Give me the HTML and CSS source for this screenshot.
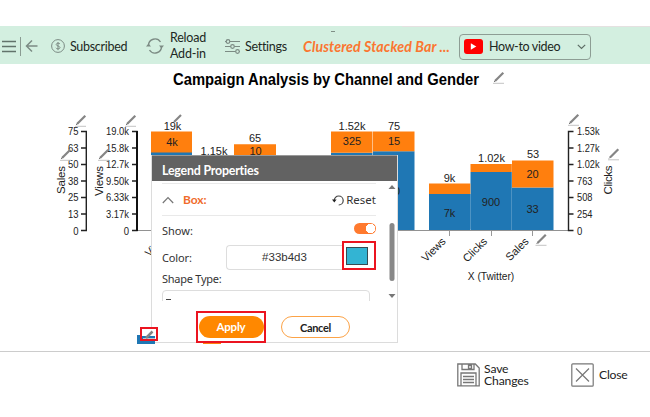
FILE: index.html
```html
<!DOCTYPE html>
<html lang="en">
<head>
<meta charset="utf-8">
<title>Campaign Analysis</title>
<link rel="stylesheet" href="styles.css">
</head>
<body>
<header class="toolbar">
  <svg class="nav" width="40" height="38"><path d="M2 15.5h14M2 20.5h14M2 25.5h14" stroke="#62736b" stroke-width="1.6"/><path d="M20.5 11v19" stroke="#8a9b92"/><path d="M37.500 20H27M32 14.500L26.500 20l5.500 5.500" fill="none" stroke="#7c8b84" stroke-width="1.5"/></svg>
  <div class="item subscribed"><svg width="14" height="14" viewBox="0 0 14 14" fill="none" stroke="#7c8b84"><circle cx="7" cy="7" r="6.4"/><path d="M9 5C8.500 3.800 5.200 3.800 5.200 5.500S9 6.800 9 8.600 5.300 10.200 4.900 8.800M7 3v8.200"/></svg><span>Subscribed</span></div>
  <div class="item reload"><svg width="18" height="16" viewBox="0 0 18 16" fill="none" stroke="#7c8b84" stroke-width="1.4"><path d="M2.500 7.500A6.500 6.500 0 0 1 14.500 4M15.500 8.500A6.500 6.500 0 0 1 3.500 12"/><path d="M0 8.500h5L2.500 5.500zM13 7.500h5l-2.500 3z" fill="#7c8b84" stroke="none"/></svg><span>Reload<br>Add-in</span></div>
  <div class="item settings"><svg width="17" height="15" viewBox="0 0 17 15" fill="#d3efe0" stroke="#7c8b84" stroke-width="1.2"><path d="M1 2.500h15M1 7.500h15M1 12.500h15"/><circle cx="4" cy="2.500" r="1.800"/><circle cx="8.500" cy="7.500" r="1.800"/><circle cx="13.500" cy="12.500" r="1.800"/></svg><span>Settings</span></div>
  <div class="chart-name">Clustered Stacked Bar ...</div>
  <div class="video"><svg width="19" height="15" viewBox="0 0 19 15"><rect width="19" height="15" rx="3" fill="#f00"/><path d="M6.800 4.300v6.400l5.500-3.200z" fill="#fff"/></svg><span>How-to video</span><svg class="chevron" width="9" height="6"><path d="M.8.8l3.700 3.700L8.200.8" fill="none" stroke="#5d6d65" stroke-width="1.200"/></svg></div>
  <i class="handle"></i>
</header>
<main class="stage">
<svg class="chart" width="650" height="287" viewBox="0 64 650 287">
  <defs>
    <g id="pencil"><path d="M2 9l8.300-8.300" stroke="#858585" stroke-width="2.200"/><path d="M1 10l1.500-1.500" stroke="#777"/><path d="M0 11.300h11" stroke="#c4c4c4"/></g>
  </defs>
  <text class="title" x="173" y="85" textLength="306" lengthAdjust="spacingAndGlyphs">Campaign Analysis by Channel and Gender</text>
  <use href="#pencil" x="493" y="72"/>

  <path d="M137 230.500H568" stroke="#929292"/>
  <g fill="#1f77b4">
    <path d="M151 152h41v78h-41zM234 160h42v70h-42zM331 152.700h41.500v77.300H331zM373 151.300h41.500v78.700H373zM429 194h41.300v36H429zM470.500 172h41.300v58h-41.300zM512 187.500h41.500v42.500H512z"/>
  </g>
  <g fill="#ff7f0e">
    <path d="M151 131.500h41v21h-41zM234 144.300h42v15.700h-42zM331 131.500h41.500v21.200H331zM373 131.500h41.500v19.800H373zM429 183.500h41.300V194H429zM470.500 164h41.300v8h-41.300zM512 160.500h41.500v27H512z"/>
  </g>
  <g class="value">
    <text x="172.500" y="130">19k</text><text x="172" y="145.500">4k</text><text x="214" y="154.500">1.15k</text><text x="255" y="142">65</text><text x="255.500" y="155">10</text>
    <text x="352" y="130">1.52k</text><text x="352" y="145">325</text><text x="394" y="130">75</text><text x="394" y="145">15</text><text x="394" y="195">60</text>
    <text x="449.500" y="181.500">9k</text><text x="449.500" y="216.500">7k</text><text x="491.500" y="162">1.02k</text><text x="491" y="205.500">900</text><text x="533" y="158">53</text><text x="532.500" y="177.500">20</text><text x="532.500" y="213">33</text>
  </g>
  <g fill="none" stroke="#222" stroke-width="1.400">
    <path d="M81 131.500h5.300v99H81M81 148h5M81 164.500h5M81 181h5M81 197.500h5M81 214h5"/>
    <path d="M132 131.500h5v99h-5M132 148h5M132 164.500h5M132 181h5M132 197.500h5M132 214h5"/>
    <path d="M573.500 131.500h-5v99h5M573.500 148h-5M573.500 164.500h-5M573.500 181h-5M573.500 197.500h-5M573.500 214h-5"/>
  </g>
  <path d="M137 131v100" stroke="#111" stroke-width="2"/>
  <g class="tick end">
    <text x="78.500" y="135" textLength="10.500" lengthAdjust="spacingAndGlyphs">75</text><text x="78.500" y="151.500" textLength="10.500" lengthAdjust="spacingAndGlyphs">63</text><text x="78.500" y="168" textLength="10.500" lengthAdjust="spacingAndGlyphs">50</text><text x="78.500" y="184.700" textLength="10.500" lengthAdjust="spacingAndGlyphs">38</text><text x="78.500" y="201" textLength="10.500" lengthAdjust="spacingAndGlyphs">25</text><text x="78.500" y="217.500" textLength="10.500" lengthAdjust="spacingAndGlyphs">13</text><text x="78.500" y="234.500" textLength="5.300" lengthAdjust="spacingAndGlyphs">0</text>
    <text x="129" y="135" textLength="23" lengthAdjust="spacingAndGlyphs">19.0k</text><text x="129" y="151.500" textLength="23" lengthAdjust="spacingAndGlyphs">15.8k</text><text x="129" y="168" textLength="23" lengthAdjust="spacingAndGlyphs">12.7k</text><text x="129" y="184.700" textLength="23" lengthAdjust="spacingAndGlyphs">9.50k</text><text x="129" y="201" textLength="23" lengthAdjust="spacingAndGlyphs">6.33k</text><text x="129" y="217.500" textLength="23" lengthAdjust="spacingAndGlyphs">3.17k</text><text x="129" y="234.500" textLength="5.300" lengthAdjust="spacingAndGlyphs">0</text>
  </g>
  <g class="tick">
    <text x="577" y="135" textLength="22.500" lengthAdjust="spacingAndGlyphs">1.53k</text><text x="577" y="151.500" textLength="22.500" lengthAdjust="spacingAndGlyphs">1.27k</text><text x="577" y="168" textLength="22.500" lengthAdjust="spacingAndGlyphs">1.02k</text><text x="577" y="184.700" textLength="15.500" lengthAdjust="spacingAndGlyphs">763</text><text x="577" y="201" textLength="15.500" lengthAdjust="spacingAndGlyphs">508</text><text x="577" y="217.500" textLength="15.500" lengthAdjust="spacingAndGlyphs">254</text><text x="577" y="234.500" textLength="5.300" lengthAdjust="spacingAndGlyphs">0</text>
  </g>
  <g class="axis-name">
    <text transform="translate(65 180) rotate(-90)" textLength="28">Sales</text>
    <text transform="translate(103 181) rotate(-90)" textLength="30">Views</text>
    <text transform="translate(611.500 180) rotate(-90)" textLength="29">Clicks</text>
  </g>
  <path d="M449.500 231v5M491.500 231v5M532.500 231v5" stroke="#999"/>
  <g class="category">
    <text transform="translate(446.500 242) rotate(-45)">Views</text><text transform="translate(488 242) rotate(-45)">Clicks</text><text transform="translate(529.500 242) rotate(-45)">Sales</text>
    <text transform="translate(170 237) rotate(-45)">Views</text>
  </g>
  <text class="group" x="491" y="280" textLength="46.500" lengthAdjust="spacingAndGlyphs">X (Twitter)</text>
  <g><use href="#pencil" x="75" y="115"/><use href="#pencil" x="125" y="115"/><use href="#pencil" x="60" y="149"/><use href="#pencil" x="98" y="149"/><use href="#pencil" x="568" y="114"/><use href="#pencil" x="608" y="148.500"/><use href="#pencil" x="535.500" y="234"/></g>
  <path d="M174 122l7-7" stroke="#858585" stroke-width="2.200"/>
</svg>
<section class="dialog">
  <h2><span>Legend Properties</span></h2>
  <div class="scroll">
    <div class="fields">
      <div class="section"><svg width="12" height="8"><path d="M.8 7L6 1.500 11.200 7" fill="none" stroke="#777" stroke-width="1.200"/></svg><b>Box:</b><svg class="undo" width="12" height="12"><path d="M2.200 6.500a4.500 4.500 0 1 1 4.500 4.500" fill="none" stroke="#444" stroke-width="1.200"/><path d="M0 5.500h4.600L2.300 8.500z" fill="#222"/></svg><span>Reset</span></div>
      <div class="row show"><span>Show:</span><i class="switch"></i></div>
      <div class="row color"><span>Color:</span><div class="input">#33b4d3</div><div class="swatch"><i></i></div></div>
      <div class="label">Shape Type:</div>
      <div class="select"><i></i></div>
    </div>
    <svg class="scrollbar" width="10" height="119"><path d="M1.500 8L5 4l3.500 4zM1.500 113L5 117l3.500-4z" fill="#777"/><rect x="2.500" y="42" width="5" height="58" rx="2.500" fill="#888"/></svg>
  </div>
  <footer><div class="mark"><button class="apply">Apply</button></div><button class="cancel">Cancel</button></footer>
</section>
<i class="legend-chip"></i>
<i class="legend-chip second"></i>
<div class="legend-mark"><svg width="14" height="10"><path d="M1 9.500h12" stroke="#b7c7d0"/><path d="M4 9L10.500 2.500" stroke="#858585" stroke-width="2.500"/></svg></div>
</main>
<footer class="actions">
  <svg width="23" height="24" viewBox="0 0 23 24" fill="none" stroke="#777" stroke-width="1.300"><path d="M.8 1h17.500l3.900 4v17.800H.8zM5 1v5.500h12V1M11.500 2.500h3v3h-3zM4 23V10h15v13M6 13.500h11M6 16.500h11M6 19.500h11"/></svg>
  <div class="save"><div>Save</div><div>Changes</div></div>
  <svg class="close-icon" width="23" height="24" viewBox="0 0 23 24" fill="none" stroke="#777" stroke-width="1.200"><rect x=".8" y=".8" width="21.400" height="22.400" rx="1"/><path d="M5 5.500l13 13M18 5.500l-13 13"/></svg>
  <span class="close">Close</span>
</footer>
</body>
</html>
```
FILE: styles.css
```css
* { box-sizing: border-box; }
body { margin: 0; width: 650px; height: 417px; padding-top: 26px; overflow: hidden; background: #fff; color: #222; font-family: Lato, "Open Sans", sans-serif; }
.toolbar { position: relative; display: flex; align-items: center; height: 38px; background: #d3efe0; font-size: 12.5px; color: #1d2823; }
.toolbar::before { content: ""; position: absolute; right: 0; top: 0; width: 248px; height: 1px; background: #e5e1e1; }
.toolbar span { white-space: nowrap; }
.nav { flex: none; }
.item { display: flex; align-items: center; flex: none; }
.item svg { flex: none; }
.subscribed { width: 95px; padding-left: 11px; gap: 5px; letter-spacing: -.3px; padding-top: 2px; }
.reload { width: 89px; padding-left: 11px; gap: 6px; line-height: 16px; letter-spacing: -.2px; padding-top: 1px; }
.settings { width: 79px; gap: 4px; padding-top: 2px; letter-spacing: -.3px; }
.chart-name { width: 156px; padding-top: 2px; font-size: 14.2px; letter-spacing: .1px; font-style: italic; font-weight: 700; color: #fb7630; white-space: nowrap; }
.video { display: flex; align-items: center; width: 132px; height: 26px; border: 1px solid #8d9d94; border-radius: 4px; padding: 0 4px; gap: 6px; margin-top: 3px; letter-spacing: -.35px; }
.chevron { margin-left: auto; }
.handle { position: absolute; left: 331px; top: 5px; width: 4px; height: 1px; background: #7f8f86; }
.stage { position: relative; height: 287px; }
.chart { display: block; font-family: "Liberation Sans", sans-serif; fill: #222; }
.title { font-size: 16px; font-weight: 700; fill: #000; }
.value { font-size: 11px; text-anchor: middle; }
.tick { font-size: 11px; }
.end, .category { text-anchor: end; }
.axis-name { font-size: 11.5px; text-anchor: middle; }
.category { font-size: 11px; }
.group { font-size: 11px; text-anchor: middle; }
.dialog { position: absolute; left: 151px; top: 91px; width: 247px; height: 188px; background: #fff; border: 1px solid #dcdcdc; border-top: 0; }
h2 { display: flex; align-items: center; margin: 0; height: 26px; padding: 3px 0 0 10px; background: #626262; border-top: 1px solid #999; color: #fff; font-size: 12.4px; font-weight: 700; letter-spacing: -.2px; }
.scroll { display: flex; height: 120px; overflow: hidden; }
.fields { width: 235px; padding: 2px 0 0 10px; font: 12.5px "Noto Sans", sans-serif; color: #333; }
.section { display: flex; align-items: center; width: 214px; height: 33px; border: solid #e9e9e9; border-width: 1px 0; }
.section b { margin-left: 9px; font: 700 12px Lato, sans-serif; letter-spacing: -.1px; color: #f06c2c; }
.section span { font-size: 11.5px; margin-left: 2px; }
.undo { margin-left: auto; }
.row { display: flex; align-items: center; }
.show { width: 214px; height: 27px; justify-content: space-between; font-size: 11px; }
.show span { padding-top: 1px; }
.switch { width: 22px; height: 11px; margin-bottom: 3px; border-radius: 6px; background: radial-gradient(circle at 16.5px 5.500px, #fff 0 4.500px, #ff7a2f 5px); }
.color { height: 28px; margin-top: -1px; font-size: 11px; }
.color > span { width: 64px; letter-spacing: -.15px; padding-top: 2px; }
.input { display: flex; align-items: center; justify-content: center; width: 116px; height: 25px; margin-top: 2px; border: 1px solid #ddd; border-right: 0; border-radius: 4px 0 0 4px; font: 11.5px "Liberation Sans", sans-serif; }
.swatch { display: flex; align-items: center; width: 34px; height: 29px; margin-top: -1px; border: 2px solid #eb1420; padding-left: 2px; background: #fff; }
.swatch i { width: 22px; height: 18px; background: #33b4d3; border: 1px solid #354b52; }
.label { height: 19px; margin-top: 1px; font-size: 11px; line-height: 15px; letter-spacing: -.25px; }
.select { width: 208px; height: 24px; border: 1px solid #ddd; border-radius: 4px; padding: 8px 0 0 3px; }
.select i { display: block; width: 5px; height: 1px; background: #444; }
.dialog footer { display: flex; align-items: center; padding: 10px 0 0 44px; }
.mark { display: flex; align-items: center; justify-content: center; width: 70px; height: 32px; border: 2px solid #eb1420; }
button { height: 22px; padding: 0; border-radius: 11px; font: 700 11.500px Lato, sans-serif; }
.apply { width: 65px; border: 0; background: #ff8800; color: #fff; padding-bottom: 2px; letter-spacing: -.2px; }
.cancel { width: 69px; margin-left: 15px; border: 1px solid #fca347; background: #fff; color: #222; font-size: 11px; letter-spacing: -.35px; }
.legend-chip { position: absolute; left: 137px; top: 271px; width: 18px; height: 9px; background: #1f77b4; }
.legend-chip.second { left: 203px; top: 279px; height: 1px; background: #ff7f0e; }
.legend-mark { position: absolute; left: 140px; top: 263px; width: 18px; height: 14px; border: 2px solid #eb1420; background: linear-gradient(#fff 0 7px, transparent 7px); }
.legend-mark svg { display: block; }
.actions { display: flex; align-items: center; height: 66px; padding: 0 0 19px 457px; border-top: 1px solid #ccc; font-size: 12.2px; }
.save { width: 77px; margin-left: 4px; padding-bottom: 1px; line-height: 12px; letter-spacing: -.15px; }
.close-icon { margin-left: 10px; }
.close { margin-left: 5px; padding-bottom: 2px; letter-spacing: -.25px; }
.actions svg { flex: none; }
```
